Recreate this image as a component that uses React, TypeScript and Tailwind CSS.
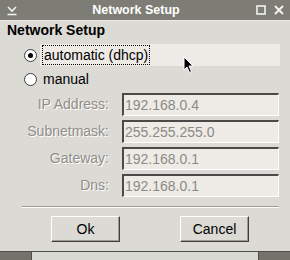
import React from 'react';

const FONT = "font-['Liberation_Sans',Arial,sans-serif]";

const fields = [
  { label: 'IP Address:', value: '192.168.0.4' },
  { label: 'Subnetmask:', value: '255.255.255.0' },
  { label: 'Gateway:', value: '192.168.0.1' },
  { label: 'Dns:', value: '192.168.0.1' },
];

function Radio({ checked }: { checked?: boolean }) {
  return (
    <div className="w-[13px] h-[13px] rounded-full border border-[#3f3f3c] bg-white flex items-center justify-center">
      {checked && <div className="w-[5px] h-[5px] rounded-full bg-black" />}
    </div>
  );
}

function TitleBar() {
  return (
    <div className="h-[21px] flex items-stretch bg-[#7d7d75] border-b border-[#ecebe6]">
      {/* window menu icon */}
      <div className="w-[22px] flex items-center justify-center">
        <svg width="10" height="10" viewBox="0 0 10 10" className="ml-[1px] mt-[1px]">
          <path d="M1 1 L5 5 L9 1" fill="none" stroke="#f2f2ee" strokeWidth="1.6" />
          <path d="M0.5 8.5 H9.5" stroke="#f2f2ee" strokeWidth="1.6" />
        </svg>
      </div>
      <div className="flex-1 text-center text-white font-bold text-[12.5px] leading-[20px]">
        Network Setup
      </div>
      <div className="w-[40px] flex items-center">
        <svg width="10" height="10" viewBox="0 0 10 10" className="ml-[6px]">
          <rect x="1" y="1" width="8" height="8" fill="none" stroke="#f2f2ee" strokeWidth="1.6" />
        </svg>
        <svg width="10" height="10" viewBox="0 0 10 10" className="ml-[8px]">
          <path d="M1 1 L9 9 M9 1 L1 9" stroke="#f2f2ee" strokeWidth="2" />
        </svg>
      </div>
    </div>
  );
}

export default function App() {
  return (
    <div className={`${FONT} relative w-[290px] h-[260px] bg-[#dcdad5] text-black overflow-hidden flex flex-col`}>
      <TitleBar />

      <div className="mt-[1px] h-[17px] leading-[17px] pl-[7px] text-[14px] font-bold">Network Setup</div>

      {/* connection mode */}
      <div className="mt-[5px] h-[22px] flex items-center">
        <div className="ml-[24px] w-[13px]"><Radio checked /></div>
        <div className="ml-[3px] mr-[10px] flex-1 h-full bg-[#eeebe7] flex items-center pl-[2px]">
          <span className="h-[20px] leading-[19px] border border-dotted border-black px-[1px] text-[14px]">
            automatic (dhcp)
          </span>
        </div>
      </div>
      <div className="mt-[2px] h-[22px] flex items-center">
        <div className="ml-[24px] w-[13px]"><Radio /></div>
        <div className="ml-[6px] text-[14px] leading-[20px]">manual</div>
      </div>

      {/* static settings */}
      <div className="mt-[3px] flex flex-col gap-[4px]">
        {fields.map(f => (
          <div key={f.label} className="h-[23px] flex items-center">
            <div className="w-[109px] text-right text-[14px] text-[#8f8d88] [text-shadow:1px_1px_0_#ffffff]">
              {f.label}
            </div>
            <div className="ml-[13px] w-[157px] h-full bg-[#eeebe7] border-t-2 border-l-2 border-t-[#4a4a48] border-l-[#4a4a48] border-b border-r border-b-white border-r-white flex items-center pl-[1px] text-[14px] text-[#8a8a86]">
              {f.value}
            </div>
          </div>
        ))}
      </div>

      <div className="mt-[9px] mx-[22px] mr-[11px] border-t border-[#9d9b96] border-b border-b-white" />

      <div className="mt-[8px] flex">
        <button className="ml-[51px] w-[69px] h-[26px] bg-[#dcdad5] border-t border-l border-white border-r border-b border-r-[#3f3f3c] border-b-[#3f3f3c] shadow-[inset_-1px_-1px_0_#9d9b96] text-[14px]">
          Ok
        </button>
        <button className="ml-[60px] w-[69px] h-[26px] bg-[#dcdad5] border-t border-l border-white border-r border-b border-r-[#3f3f3c] border-b-[#3f3f3c] shadow-[inset_-1px_-1px_0_#9d9b96] text-[14px]">
          Cancel
        </button>
      </div>

      {/* bottom window frame */}
      <div className="mt-[9px] h-[9px] flex border-t border-[#4d4d49]">
        <div className="w-[31px] bg-[#73736c]" />
        <div className="flex-1 bg-[#d9d9d3] border-x border-[#4d4d49]" />
        <div className="w-[31px] bg-[#73736c]" />
      </div>

      {/* mouse pointer */}
      <svg width="12" height="18" viewBox="0 0 12 18" className="absolute left-[183px] top-[56px]">
        <path d="M1 1 L1 14 L4 11 L6.5 16.5 L8.5 15.5 L6 10 L10 10 Z" fill="#000" stroke="#fff" strokeWidth="1" />
      </svg>
    </div>
  );
}
